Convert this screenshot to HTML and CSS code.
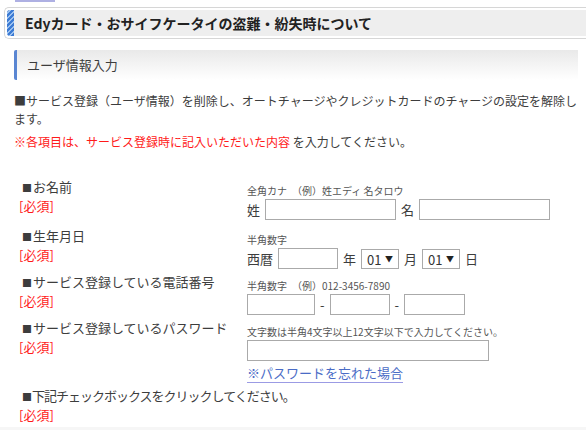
FILE: index.html
```html
<!DOCTYPE html>
<html lang="ja">
<head>
<meta charset="utf-8">
<title>Edyカード・おサイフケータイの盗難・紛失時について</title>
<link rel="stylesheet" href="styles.css">
</head>
<body>
<div class="topline"></div>
<div class="title-box">
  <span class="stripe"></span>
  <h1 class="title">Edyカード・おサイフケータイの盗難・紛失時について</h1>
</div>
<div class="content">
  <h2 class="sub">ユーザ情報入力</h2>
  <p class="lead">■サービス登録（ユーザ情報）を削除し、オートチャージやクレジットカードのチャージの設定を解除します。</p>
  <p class="notice"><span class="red">※各項目は、サービス登録時に記入いただいた内容</span> を入力してください。</p>
  <div class="form">
    <div class="row r1">
      <div class="label"><div class="name"><span class="sq">■</span>お名前</div><div class="req">[必須]</div></div>
      <div class="field">
        <div class="note">全角カナ　（例）姓エディ 名タロウ</div>
        <div class="line"><span>姓</span><input class="in w131" type="text"><span>名</span><input class="in w131" type="text"></div>
      </div>
    </div>
    <div class="row">
      <div class="label"><div class="name"><span class="sq">■</span>生年月日</div><div class="req">[必須]</div></div>
      <div class="field">
        <div class="note">半角数字</div>
        <div class="line"><span>西暦</span><input class="in w60" type="text"><span>年</span><span class="sel"><select><option>01</option></select><span class="arrow">▼</span></span><span>月</span><span class="sel"><select><option>01</option></select><span class="arrow">▼</span></span><span>日</span></div>
      </div>
    </div>
    <div class="row">
      <div class="label"><div class="name"><span class="sq">■</span>サービス登録している電話番号</div><div class="req">[必須]</div></div>
      <div class="field">
        <div class="note">半角数字　（例）012-3456-7890</div>
        <div class="line"><input class="in w68" type="text"><span>-</span><input class="in w60" type="text"><span>-</span><input class="in w61" type="text"></div>
      </div>
    </div>
    <div class="row">
      <div class="label"><div class="name"><span class="sq">■</span>サービス登録しているパスワード</div><div class="req">[必須]</div></div>
      <div class="field">
        <div class="note">文字数は半角4文字以上12文字以下で入力してください。</div>
        <div class="line"><input class="in w242" type="password"></div>
        <a class="forgot" href="#">※パスワードを忘れた場合</a>
      </div>
    </div>
    <div class="row r5">
      <div class="label wide"><div class="name narrow"><span class="sq">■</span>下記チェックボックスをクリックしてください。</div><div class="req">[必須]</div></div>
    </div>
  </div>
</div>
<div class="footband"></div>
</body>
</html>
```

FILE: styles.css
```css
html, body {
  margin: 0;
  padding: 0;
  overflow: hidden;
  background: #fff;
}
body {
  font-family: "Noto Sans CJK JP", "Noto Sans", sans-serif;
  color: #3d3d3d;
  width: 586px;
}
.topline {
  width: 40px;
  height: 2px;
  margin-left: 15px;
  background: #aeb0e3;
}
.title-box {
  display: flex;
  margin: 5px 0 0 4px;
  border: 1px solid #d6d6d6;
  border-right: none;
  border-radius: 5px 0 0 5px;
  padding: 2px 0 2px 2px;
  height: 26px;
}
.stripe {
  width: 7px;
  border-radius: 3px 0 0 3px;
  background: repeating-linear-gradient(135deg, #3c7bd4 0 2px, #9cc1ef 2px 3.5px);
}
.title {
  flex: 1;
  margin: 0;
  padding-left: 11px;
  font-size: 14px;
  font-weight: bold;
  line-height: 26px;
  color: #222;
  background-color: #eeeeee;
}
.content {
  padding: 0 6px 0 14px;
}
.sub {
  margin: 11px 2px 0 0;
  height: 30px;
  border-left: 3px solid #5a86d2;
  border-radius: 2px 0 0 2px;
  padding-left: 10px;
  font-size: 13px;
  font-weight: normal;
  line-height: 30px;
  color: #3d3d3d;
  background: linear-gradient(#e9e9e9, #ffffff);
}
.lead {
  margin: 12px 0 0;
  font-size: 12px;
  line-height: 18px;
}
.notice {
  margin: 5px 0 0;
  font-size: 12px;
  line-height: 18px;
}
.red {
  color: #ff1a1a;
}
.form {
  margin-top: 26px;
}
.row {
  display: flex;
  align-items: flex-start;
  margin-bottom: 3px;
}
.row.r1 {
  margin-bottom: 6px;
}
.label {
  width: 228px;
  padding-left: 5px;
  font-size: 13px;
  line-height: 19px;
  flex: none;
}
.label.wide {
  width: auto;
}
.sq {
  font-size: 10px;
  line-height: 0;
  margin: 0 1px 0 3px;
}
.name.narrow {
  letter-spacing: -1px;
}
.req {
  color: #ff1a1a;
}
.field {
  padding-top: 6px;
  font-size: 13px;
}
.note {
  font-size: 10px;
  line-height: 15px;
  color: #555;
}
.line {
  display: flex;
  align-items: center;
  gap: 5px;
  margin-top: 1px;
  height: 21px;
  line-height: 21px;
}
.in {
  box-sizing: border-box;
  height: 21px;
  border: 1px solid #aaaaaa;
  border-radius: 0;
  padding: 0 3px;
  margin: 0;
  background: #fff;
}
.w131 { width: 131px; }
.w60 { width: 60px; }
.w68 { width: 68px; }
.w61 { width: 61px; }
.w242 { width: 242px; }
.sel {
  position: relative;
  display: inline-block;
  height: 20px;
}
.sel select {
  appearance: none;
  -webkit-appearance: none;
  box-sizing: border-box;
  width: 38px;
  height: 20px;
  border: 1px solid #aaaaaa;
  border-radius: 0;
  padding: 0 0 0 5px;
  margin: 0;
  background: #fff;
  font-family: "Noto Sans CJK JP", "Noto Sans", sans-serif;
  font-size: 13px;
  color: #333;
}
.arrow {
  position: absolute;
  right: 6px;
  top: 0;
  font-size: 8px;
  line-height: 20px;
  color: #222;
  pointer-events: none;
}
.forgot {
  display: inline-block;
  margin-top: 2px;
  font-size: 13px;
  line-height: 19px;
  color: #4a6cc6;
  text-decoration: none;
  border-bottom: 1px solid #9b9be4;
}
.footband {
  height: 10px;
  background: #f6f6f6;
}
```
